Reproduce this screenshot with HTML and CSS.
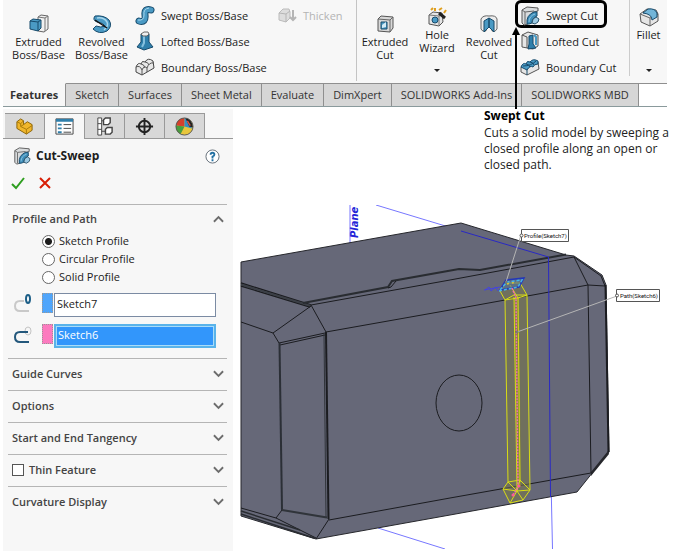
FILE: index.html
```html
<!DOCTYPE html>
<html lang="en">
<head>
<meta charset="utf-8">
<meta name="viewport" content="width=device-width, initial-scale=1">
<title>Cut-Sweep</title>
<link rel="stylesheet" href="styles.css">
</head>
<body>
<svg class="defs" aria-hidden="true">
  <symbol id="i-sweepcut" viewBox="0 0 20 20">
    <path d="M2 4 7 1 18 2 18 5 14 6Q8 9 8 18L4 19 2 17Z" fill="#d9dcde" stroke="#555"/>
    <path d="M2 4 5 6 5 18M5 6 14 5" fill="none" stroke="#666"/>
    <path d="M7 18Q6 9 14 6L17 6 17 10Q12 12 12 17L9 18Z" fill="#3d8db8" stroke="#174a6b"/>
    <path d="M9 16Q9 10 15 8" fill="none" stroke="#8ec6e4"/>
    <path d="M13 13 16 11 19 13 18 16 15 18 12 17Z" fill="#9cc9e2" stroke="#2b546b"/>
  </symbol>
  <symbol id="i-chevron" viewBox="0 0 12 8"><path d="M1 1 6 6 11 1" fill="none" stroke="#6c6c6c" stroke-width="2"/></symbol>
</svg>

<header class="ribbon">
  <div class="commands">
    <button class="big wide">
      <svg viewBox="0 0 20 20"><path d="M9 3 12 1 19 2 19 15 15 18 9 17Z" fill="#f0f0f0" stroke="#666"/><path d="M16 4V17M16 4 9 3M16 4 19 2" fill="none" stroke="#777"/><path d="M1 7 4 5 12 6 12 14 9 17 1 15Z" fill="#4a9ac4" stroke="#174a6b"/><path d="M1 7 9 8 12 6M9 8V17" fill="none" stroke="#174a6b"/></svg>
      <span>Extruded Boss/Base</span></button>
    <button class="big wide">
      <svg viewBox="0 0 20 20"><path d="M3 2Q0 6 5 8 12 9 13 12 9 14 4 12L1 15Q7 21 15 17 21 12 17 6 12 1 3 2Z" fill="#4a9ac4" stroke="#174a6b"/><path d="M5 4Q12 3 15 8 17 12 12 16" fill="none" stroke="#a8d6ec" stroke-width="1.5"/><path d="M3 6 15 14" stroke="#111" stroke-width="1.5"/></svg>
      <span>Revolved Boss/Base</span></button>
    <div class="list boss">
      <button class="row"><svg viewBox="0 0 20 20"><path d="M4 16Q11 18 10 10 9 3 16 5" fill="none" stroke="#174a6b" stroke-width="7" stroke-linecap="round"/><path d="M4 16Q11 18 10 10 9 3 16 5" fill="none" stroke="#4a9ac4" stroke-width="5" stroke-linecap="round"/><path d="M3 15Q9 16 9 10 8 4 14 3" fill="none" stroke="#a8d6ec"/></svg>Swept Boss/Base</button>
      <button class="row"><svg viewBox="0 0 20 20"><path d="M6 3 6 11 2 16 9 19 18 16 14 11 14 3Z" fill="#2f7fab" stroke="#174a6b"/><path d="M9 4 9 12 7 16" fill="none" stroke="#85c0de" stroke-width="2"/><path d="M6 3 9 1 13 1 14 3 12 5 8 5Z" fill="#eee" stroke="#666"/></svg>Lofted Boss/Base</button>
      <button class="row"><svg viewBox="0 0 20 20"><path d="M1 10Q3 5 6 7 7 3 10 5 13 0 18 4L19 11 7 18 1 15Z" fill="#e8e8e8" stroke="#444"/><path d="M1 10Q5 8 7 13V18M7 13Q9 8 12 11 14 5 19 6M6 7Q9 7 10 11M10 5Q13 5 14 8M12 11V15" fill="none" stroke="#555"/></svg>Boundary Boss/Base</button>
    </div>
    <div class="list thick">
      <button class="row" disabled><svg viewBox="0 0 20 20"><path d="M2 8 6 4 12 4 13 7 13 13 9 17 2 15Z" fill="#ddd" stroke="#bbb"/><path d="M2 8 9 9 13 6M9 9V17" fill="none" stroke="#b5b5b5"/><path d="M16 5V14M13 12 16 15 19 12" fill="none" stroke="#b5b5b5" stroke-width="2"/></svg>Thicken</button>
    </div>
    <div class="cuts">
      <button class="big"><svg viewBox="0 0 20 20"><path d="M3 5 6 2 18 3 18 14 15 18 3 17Z" fill="#d8d8d8" stroke="#555"/><path d="M3 5 15 6V18M15 6 18 3" fill="none" stroke="#666"/><path d="M6 8H12V15H6Z" fill="#4a9ac4" stroke="#174a6b"/><path d="M7 14V11L11 8V13Z" fill="#d5ecf7"/></svg>
        <span>Extruded Cut</span></button>
      <button class="big top drop"><svg viewBox="0 0 20 20"><path d="M2 8 6 5 15 6 16 15 12 19 2 17Z" fill="#e5e5e5" stroke="#555"/><path d="M2 8 12 9V18M12 9 15 7" fill="none" stroke="#777"/><ellipse cx="8" cy="13" rx="3" ry="3" fill="#4a9ac4" stroke="#174a6b"/><path d="M12 6 18 11" stroke="#222" stroke-width="3"/><path d="M4 3 6 1M8 4 8 1M12 3 15 1M17 6 19 3" stroke="#e0a020" stroke-width="2"/></svg>
        <span>Hole Wizard</span></button>
      <button class="big"><svg viewBox="0 0 20 20"><path d="M2 5Q4 1 10 2 17 1 18 5V15Q16 19 13 17V7L10 10 7 7V17Q3 18 2 15Z" fill="#ececec" stroke="#666"/><path d="M5 7 10 4 10 13 5 18ZM15 7 10 4 10 13 15 18Z" fill="#4a9ac4" stroke="#174a6b"/></svg>
        <span>Revolved Cut</span></button>
    </div>
    <div class="list cutlist">
      <div class="callout"><button class="row"><svg><use href="#i-sweepcut"/></svg>Swept Cut</button>
        <svg class="arrow" viewBox="0 0 8 82" aria-hidden="true"><path d="M4 3V82" stroke="#000" stroke-width="2"/><path d="M4 0 8 8H0Z"/></svg></div>
      <button class="row"><svg viewBox="0 0 20 20"><path d="M2 4 8 1 18 4 18 15 13 18 2 16Z" fill="#e6e6e6" stroke="#555"/><path d="M2 4 7 6V17" fill="none" stroke="#555"/><path d="M9 5 13 4 13 13 16 17 8 18 9 13Z" fill="#2f7fab" stroke="#174a6b"/><path d="M14 4 16 6V14" fill="none" stroke="#4a9ac4" stroke-width="2"/></svg>Lofted Cut</button>
      <button class="row"><svg viewBox="0 0 20 20"><path d="M1 10 18 5 19 12 7 18 1 15Z" fill="#e6e6e6" stroke="#555"/><path d="M1 10Q3 5 6 7 7 3 10 5 13 1 18 4V7Q14 7 13 10 10 8 7 13Z" fill="#4a9ac4" stroke="#174a6b"/><path d="M6 7Q9 7 10 10M10 5Q13 5 14 8M3 9Q11 9 16 4M7 13V18" fill="none" stroke="#174a6b"/></svg>Boundary Cut</button>
    </div>
    <button class="big top drop fillet"><svg viewBox="0 0 20 20"><path d="M1 7 8 2 17 3 19 7V14L11 19 2 15Z" fill="#e6e6e6" stroke="#555"/><path d="M1 7 11 11V19M11 11 19 7" fill="none" stroke="#666"/><path d="M4 6 9 2Q16 1 18 6V10L13 13Q13 7 4 6Z" fill="#72b5d8" stroke="#174a6b"/></svg>
      <span>Fillet</span></button>
  </div>
  <nav class="tabs">
    <a href="#" class="on">Features</a><a href="#">Sketch</a><a href="#">Surfaces</a><a href="#">Sheet Metal</a><a href="#">Evaluate</a><a href="#">DimXpert</a><a href="#">SOLIDWORKS Add-Ins</a><a href="#">SOLIDWORKS MBD</a>
  </nav>
</header>

<main>
  <aside class="panel">
    <div class="ptabs">
      <button aria-label="Feature tree"><svg viewBox="0 0 20 20"><path d="M2 5 6 2 9 4V8L13 5 18 8V14L12 18 2 12Z" fill="#f0b62c" stroke="#8a6205"/><path d="M2 5 6 7V10L12 13V18M6 7 9 4M12 13 18 9M6 10 9 8" fill="none" stroke="#a87908"/></svg></button>
      <button class="on" aria-label="Properties"><svg viewBox="0 0 20 20"><path d="M1 2H19V18H1Z" fill="#fff" stroke="#444"/><path d="M1 2H19V5H1Z" fill="#2f7fab"/><path d="M3 7H7V9H3ZM3 11H7V13H3ZM3 15H7V17H3Z" fill="#2f7fab"/><path d="M9 8H17M9 12H17M9 16H17" stroke="#444"/></svg></button>
      <button aria-label="Configurations"><svg viewBox="0 0 20 20"><path d="M3 1H7V19H3ZM7 4H10M7 15H11" fill="#fff" stroke="#444"/><path d="M3 7H7M3 13H7" stroke="#444"/><path d="M9 3 11 1H16V6L14 8H9ZM11 13 13 11H18V16L16 18H11Z" fill="#fff" stroke="#444" stroke-width="1.500"/></svg></button>
      <button aria-label="Dimensions"><svg viewBox="0 0 20 20"><circle cx="10" cy="10" r="6" fill="none" stroke="#222" stroke-width="2"/><path d="M10 1V19M1 10H19" stroke="#222" stroke-width="2"/></svg></button>
      <button aria-label="Appearances"><svg viewBox="0 0 20 20"><circle cx="10" cy="10" r="9" fill="#e8c63c"/><path d="M10 10 1 9A9 9 0 0 1 10 1Z" fill="#d6402c"/><path d="M10 10V1A9 9 0 0 1 14 2L18 12Z" fill="#388cc0"/><path d="M10 10 1 9A9 9 0 0 0 6 18Z" fill="#4a9e3e"/><path d="M11 1Q18 2 19 11L15 10Z" fill="#222"/><path d="M13 4 16 9" stroke="#e05340" stroke-width="1.500"/><circle cx="10" cy="10" r="9" fill="none" stroke="#555"/></svg></button>
    </div>
    <div class="title">
      <svg><use href="#i-sweepcut"/></svg><h1>Cut-Sweep</h1>
      <button aria-label="Help"><svg viewBox="0 0 16 16"><circle cx="8" cy="8" r="7" fill="#fff" stroke="#606b75"/><path d="M6 6Q6 4 8 4 10 4 10 6 10 7 8 8V10M8 11V13" fill="none" stroke="#2471a3" stroke-width="2"/></svg></button>
    </div>
    <div class="confirm">
      <button aria-label="OK"><svg viewBox="0 0 14 14"><path d="M1 8 5 12 13 2" fill="none" stroke="#2e9e1f" stroke-width="2"/></svg></button>
      <button aria-label="Cancel"><svg viewBox="0 0 14 14"><path d="M2 2 12 12M12 2 2 12" fill="none" stroke="#d81e05" stroke-width="2"/></svg></button>
    </div>
    <section class="profile">
      <button class="head">Profile and Path<svg class="up"><use href="#i-chevron"/></svg></button>
      <div class="radios">
        <label><input type="radio" name="p" checked>Sketch Profile</label>
        <label><input type="radio" name="p">Circular Profile</label>
        <label><input type="radio" name="p">Solid Profile</label>
      </div>
      <div class="field">
        <svg viewBox="0 0 20 20"><path d="M16 18H7Q2 18 2 13 2 8 7 8H11" fill="none" stroke="#c9c9c9" stroke-width="2"/><ellipse cx="15" cy="6" rx="2" ry="4" fill="#fff" stroke="#1d5f88" stroke-width="2"/></svg>
        <i class="swatch blue"></i><input type="text" aria-label="Profile" value="Sketch7">
      </div>
      <div class="field sel">
        <svg viewBox="0 0 20 20"><ellipse cx="15" cy="7" rx="3" ry="4" fill="none" stroke="#c4c4c4"/><path d="M16 18H7Q2 18 2 13 2 8 7 8H15" fill="none" stroke="#24587c" stroke-width="2"/></svg>
        <i class="swatch pink"></i><input type="text" aria-label="Path" value="Sketch6">
      </div>
    </section>
    <section><button class="head">Guide Curves<svg><use href="#i-chevron"/></svg></button></section>
    <section><button class="head">Options<svg><use href="#i-chevron"/></svg></button></section>
    <section><button class="head">Start and End Tangency<svg><use href="#i-chevron"/></svg></button></section>
    <section class="head"><label><input type="checkbox">Thin Feature</label><svg><use href="#i-chevron"/></svg></section>
    <section><button class="head">Curvature Display<svg><use href="#i-chevron"/></svg></button></section>
  </aside>

  <div class="work">
    <div class="tip">
      <h2>Swept Cut</h2>
      <p>Cuts a solid model by sweeping a closed profile along an open or closed path.</p>
    </div>
    <svg class="model" viewBox="240 205 433 344" role="img" aria-label="Model with swept cut preview">
      <g fill="none" stroke="#7777ff"><path d="M350 205V250M376 205 462 231M378 528 445 549M551 480 552.500 549"/></g>
      <path d="M241 262 461 223 566 255 574 256 602 275 606 285 609 452 577 492 450 515 316 539 241 516Z" fill="#666878" stroke="#26272c"/>
      <path d="M591 472 608 451 609 454 591 476Z" fill="#26272c"/>
      <g fill="none" stroke="#1b1c20">
        <path d="M241 283 311 305M241 286 310 307" stroke-width="1.500"/>
        <path d="M241 284.500 311 306" stroke="#3b3f46" stroke-width="2"/>
        <path d="M241 322 273 333 311 306M273 333 279 343 325 333M280 345 325 335"/>
        <path d="M311 305 326 332"/>
        <path d="M279.500 343 282 510" stroke="#2b2f36" stroke-width="2"/>
        <path d="M324 334 326 517" stroke="#30343a"/>
        <path d="M326 332 328.500 519" stroke-width="2"/>
        <path d="M303 303 388 287 392 281 459 269 480 270 566 254.500" stroke="#292c31" stroke-width="2"/>
        <path d="M388 288 391 287 396 281"/>
        <path d="M311 305 450 280 574 257 588 285 605 286"/>
        <path d="M574 257 601 276 605 286M326 332 450 310 588 285 591 473"/>
        <path d="M605.500 285 608.500 452" stroke-width="2"/>
        <path d="M329 520 450 498 591 473M329 519 316 539M282 510 276 518M241 508 276 518 316 538"/>
        <path d="M282 510 327 517.500" stroke="#30343a" stroke-width="2"/>
        <path d="M241 514 314 538M241 511 300 530" stroke="#292c31" stroke-width="1.500"/>
        <ellipse cx="459" cy="403" rx="23" ry="28"/>
      </g>
      <path d="M461 231 548.500 257 550.500 497" fill="none" stroke="#2929c4"/>
      <path d="M505 300 500 291 505 282 520 281 527 295 530 490 523 500 510 503 503 489 508 482Z" fill="#77764b" opacity=".6"/>
      <path d="M514 298H519L521 486H517Z" fill="#8f8f28" opacity=".6"/>
      <g fill="none" stroke="#d9dd15">
        <path d="M500 291 505 300 508 482M501 290 506 283 520 283 527 295 530 490M505 300 514 295 527 295M505 300 518 298 527 295M514 297 517 489M518 297 520 482M510 285 518 298"/>
        <path d="M508 482 520 480 530 490 523 500 510 503 503 489ZM517 491 508 482M517 491 520 480M517 491 530 490M517 491 523 500M517 491 510 503M517 491 503 489"/>
      </g>
      <path d="M500 290 506 280 524 278 519 287Z" fill="#4f6fa0" fill-opacity=".6" stroke="#2337b8" stroke-width="1.500"/>
      <path d="M499 291 518 287 522 280 507 282Z" fill="none" stroke="#45b6e8" stroke-width="1.500" stroke-dasharray="3 2"/>
      <path d="M485 290 489 287 491 291 496 287 498 291M484 290 500 287" fill="none" stroke="#4545dd"/>
      <path d="M507 284 517 282" stroke="#e0c634" stroke-width="1.500" stroke-dasharray="2 3"/>
      <path d="M512 288 516 298 518 487 513 495" fill="none" stroke="#f06eae" stroke-width="1.500" stroke-dasharray="2 1"/>
      <circle cx="513" cy="495" r="1.500" fill="#f59"/><circle cx="519" cy="486" r="1.500" fill="#f59"/>
      <path d="M521 235 506 282M617 296 517 332" stroke="#b5b5b5" fill="none"/>
      <g fill="#fff" stroke="#555"><path d="M521.500 229.500H568.500V241.500H521.500ZM616.500 289.500H659.500V301.500H616.500Z"/><circle cx="521.500" cy="235.500" r="1.500"/><circle cx="617" cy="295.500" r="1.500"/><circle cx="517" cy="332" r="1"/><circle cx="506" cy="282" r="1"/></g>
      <text class="tag" x="524" y="238">Profile(Sketch7)</text>
      <text class="tag" x="620" y="298">Path(Sketch6)</text>
      <text class="plane" transform="translate(358 238) rotate(-90)">Plane</text>
    </svg>
  </div>
</main>
</body>
</html>
```
FILE: styles.css
```css
* { box-sizing: border-box; }
body {
  margin: 0;
  min-height: 100vh;
  display: flex;
  flex-direction: column;
  background: #fff;
  color: #1c1c1c;
  font: 11px/14px "Open Sans", "Noto Sans", sans-serif;
}
button, input { font: inherit; color: inherit; }
button { margin: 0; padding: 0; border: 0; background: none; }
h1, h2, p { margin: 0; }
.defs { position: absolute; width: 0; height: 0; }

.ribbon { margin: 0 6px 0 3px; }
.commands {
  display: flex;
  height: 83px;
  background: #f7f7f7;
  line-height: 13px;
}
.big {
  flex: none;
  display: flex;
  flex-direction: column;
  align-items: center;
  align-self: flex-start;
  width: 52px;
  padding-top: 14px;
  text-align: center;
}
.big.wide { width: 63px; padding: 14px 4px 0; }
.big.wide:first-child { margin-left: 4px; }
.big svg { width: 20px; height: 20px; margin-bottom: 1px; }
.big.top { padding-top: 7px; }
.drop { height: 76px; }
.drop::after {
  content: "";
  margin-top: auto;
  margin-bottom: 4px;
  border: 3px solid transparent;
  border-top-color: #222;
  border-bottom: 0;
}
.list { padding-top: 2px; }
.row {
  display: flex;
  align-items: center;
  gap: 6px;
  height: 26px;
  white-space: nowrap;
}
.row svg { width: 20px; height: 20px; }
.row:disabled { color: #b4b4b4; }
.boss { width: 144px; padding-left: 2px; }
.thick { width: 79px; }
.cuts { display: flex; border-left: 1px solid #c4c4c4; padding-left: 2px; height: 81px; }
.cutlist { width: 114px; padding: 0; }
.cutlist > .row { padding-left: 5px; }
.callout {
  position: relative;
  width: 92px;
  height: 28px;
  border: 3px solid #000;
  border-radius: 6px;
}
.callout .row { height: 22px; padding: 3px 0 0 2px; }
.arrow { position: absolute; left: -6px; top: 24px; width: 8px; height: 82px; }
.fillet { width: 38px; border-left: 1px solid #ccc; }

.tabs {
  display: flex;
  border-bottom: 1px solid #8a9a9c;
  background: linear-gradient(#8f8f8f, #8f8f8f) 0 0 / 100% 1px no-repeat;
}
.tabs a {
  padding: 0 9px;
  border: 1px solid #8f8f8f;
  border-left: 0;
  border-bottom: 0;
  background: #d6d6d6;
  color: #333;
  line-height: 22px;
  text-decoration: none;
  white-space: nowrap;
}
.tabs .on { padding: 0 7px; border-top-color: #f7f7f7; background: #f7f7f7; font-weight: 700; }

main { flex: 1; display: grid; grid-template-columns: 230px 1fr; margin-left: 3px; }
.panel { background: #f7f7f7; margin-top: 2px; }
.ptabs { display: flex; margin-top: 4px; padding-left: 2px; border-bottom: 1px solid #999; }
.ptabs button {
  width: 40px;
  height: 25px;
  border: 1px solid #999;
  border-width: 1px 1px 0 0;
  background: #d8d8d8;
}
.ptabs button.on { background: #f7f7f7; margin-bottom: -1px; height: 26px; }
.ptabs svg { display: block; width: 19px; height: 19px; margin: auto; }
.title { display: flex; align-items: center; height: 34px; padding: 0 13px 0 10px; gap: 5px; }
.title svg { display: block; width: 18px; height: 20px; }
.title h1 { flex: 1; font-size: 12px; font-weight: 700; }
.title button svg { width: 15px; height: 15px; }
.confirm { display: flex; align-items: flex-start; gap: 13px; height: 31px; padding: 3px 8px 0; }
.confirm svg { display: block; width: 14px; height: 14px; }
section { margin: 0 6px 0 5px; border-top: 1px solid #b5b5b5; }
.head {
  display: flex;
  align-items: center;
  justify-content: space-between;
  width: 100%;
  height: 31px;
  padding: 0 3px 2px 4px;
  color: #444;
  font-weight: 600;
}
section.head { width: auto; height: 32px; }
.head svg { width: 11px; height: 8px; }
.head .up { transform: scaleY(-1); }
.head label { display: flex; align-items: center; gap: 5px; }
input[type="checkbox"] {
  appearance: none;
  width: 12px;
  height: 12px;
  margin: 0;
  border: 1px solid #555;
  background: #fff;
}
.profile { padding-bottom: 10px; }
.profile .head { height: 27px; padding-bottom: 0; }
.radios { display: flex; flex-direction: column; margin-left: 34px; }
.radios label { display: flex; align-items: center; gap: 4px; height: 18px; }
input[type="radio"] {
  appearance: none;
  width: 13px;
  height: 13px;
  margin: 0;
  border: 1px solid #666;
  border-radius: 50%;
  background: #fff;
}
input[type="radio"]:checked { background: radial-gradient(#1c1c1c 0 3px, #fff 4px); }
.field { display: flex; height: 24px; margin: 7px 11px 0 5px; }
.field svg { width: 20px; height: 20px; }
.swatch { width: 11px; height: 20px; margin: 0 1px 0 9px; border: 1px dotted #999; }
.blue { background: #4fa5fb; }
.pink { background: #fc7abf; }
.field input { flex: 1; min-width: 0; padding: 0 2px 2px; border: 1px solid #7b8ba3; background: #fff; }
.field.sel input { border: 2px solid #59b3ea; outline: 1px solid #a9dcf8; outline-offset: -3px; background: #3296fb; color: #fff; }

.work { min-width: 0; padding-left: 7px; }
.tip { width: 189px; height: 98px; margin-left: auto; color: #222; }
.tip h2 { font-size: 12px; line-height: 18px; color: #000; }
.tip p { font-size: 12px; line-height: 16px; }
.model { display: block; width: 100%; height: auto; }
.tag { font: 6px Roboto, sans-serif; fill: #111; }
.plane { font: italic 700 10px "DejaVu Sans", sans-serif; fill: #2424d8; }
```
